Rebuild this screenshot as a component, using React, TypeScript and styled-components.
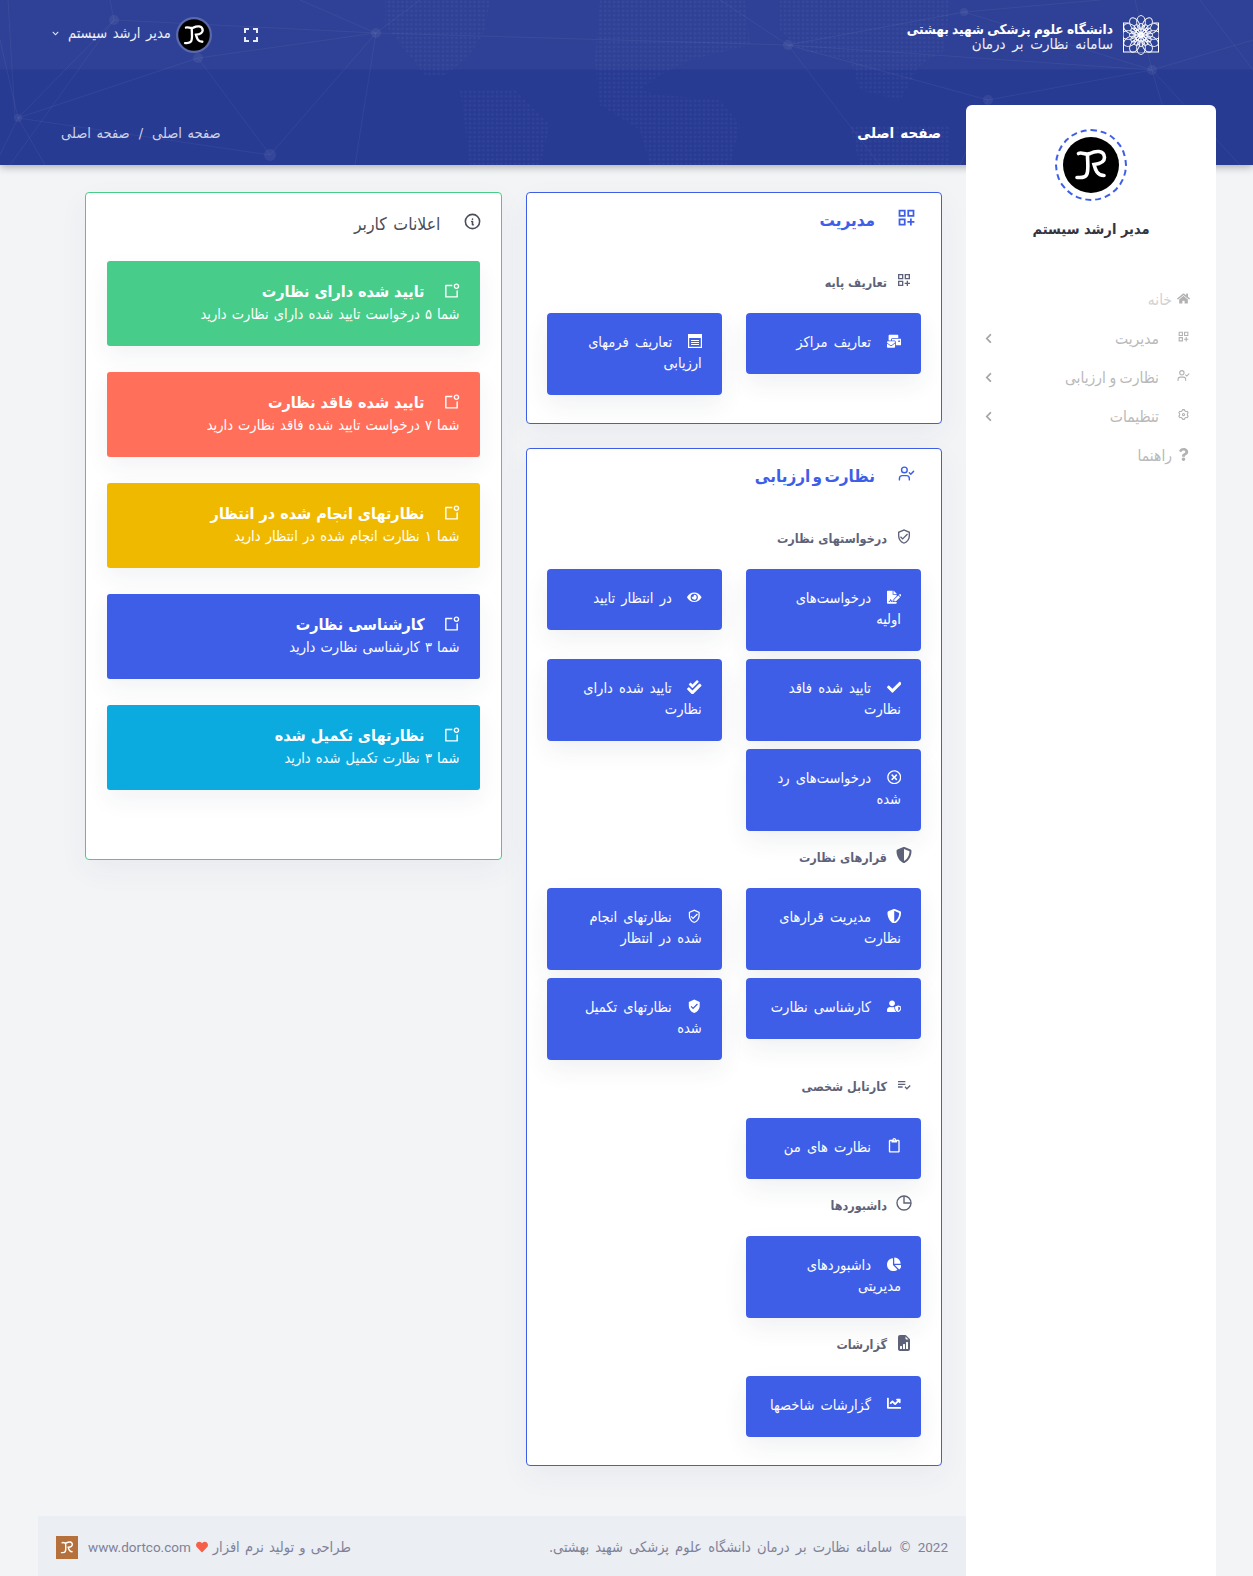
import React from "react";
import styled, { createGlobalStyle } from "styled-components";
import {
  FaMailBulk, FaFileSignature, FaEye, FaCheck, FaCheckDouble, FaRegTimesCircle, FaShieldAlt,
  FaUserShield, FaRegClipboard, FaChartPie, FaChartLine, FaHome, FaQuestion, FaChevronLeft, FaChevronDown, FaHeart,
} from "react-icons/fa";
import { MdOutlineDashboardCustomize, MdPlaylistAddCheck, MdVerifiedUser, MdOutlineVerifiedUser, MdFullscreen } from "react-icons/md";
import { TbInfoCircle } from "react-icons/tb";
import { LuUserCheck } from "react-icons/lu";
import { BsFileEarmarkBarGraphFill } from "react-icons/bs";
import { RiNotificationBadgeLine, RiSettings3Line } from "react-icons/ri";

const GlobalStyle = createGlobalStyle`
  html, body { margin: 0; padding: 0; background: #f3f4f6; }
  body { font-family: "DejaVu Sans Condensed", "DejaVu Sans", sans-serif; font-stretch: condensed; color: #3f4254; word-spacing: 1.5px; }
  * { box-sizing: border-box; }
`;

const Page = styled.div`
  direction: rtl;
  width: 1253px;
  min-height: 1576px;
  display: flex;
  flex-direction: column;
`;

const Header = styled.header`
  position: relative;
  height: 165px;
  background: #283b93;
  box-shadow: 0 2px 8px rgba(0, 0, 0, 0.3);
  overflow: hidden;
`;

const HeaderArt = styled.svg`
  position: absolute;
  inset: 0;
  width: 100%;
  height: 100%;
`;

const TopBar = styled.div`
  position: relative;
  height: 70px;
  background: rgba(255, 255, 255, 0.035);
  border-bottom: 1px solid rgba(0, 0, 0, 0.05);
  display: flex;
  align-items: center;
  justify-content: space-between;
  padding: 0 94px 0 52px;
  color: #fff;
`;

const Brand = styled.div`
  display: flex;
  align-items: center;
  gap: 10px;
`;

const BrandText = styled.div`
  display: flex;
  flex-direction: column;
  margin-top: 4px;
`;

const BrandTitle = styled.div`
  font-size: 13.5px;
  font-weight: 700;
  line-height: 17px;
  word-spacing: -1px;
`;

const BrandSub = styled.div`
  font-size: 15px;
  line-height: 15px;
  margin-top: -1px;
  color: #eef0f8;
  word-spacing: 2.5px;
`;

const UserTools = styled.div`
  display: flex;
  align-items: center;
  direction: ltr;
`;

const UserName = styled.span`
  direction: rtl;
  font-size: 14.5px;
  margin: -3px 5px 0 9px;
  color: #eef0f8;
`;

const ExpandIcon = styled.span`
  display: flex;
  margin-left: 27px;
  font-size: 24px;
  color: #e8eaf5;
`;

const SmallChevron = styled.span`
  display: flex;
  margin-top: -3px;
  font-size: 7px;
  color: #e8eaf5;
`;

const TitleBar = styled.div`
  position: relative;
  height: 95px;
  display: flex;
  justify-content: space-between;
  padding: 51px 312px 0 61px;
  color: #fff;
`;

const PageTitle = styled.h1`
  margin: 0;
  font-size: 15px;
  font-weight: 700;
  line-height: 24px;
`;

const Crumbs = styled.div`
  display: flex;
  gap: 9px;
  font-size: 14.5px;
  line-height: 24px;
  color: #ced3e8;
`;

const Body = styled.div`
  position: relative;
  flex: 1;
  display: flex;
  margin-top: -60px;
  padding-right: 37px;
`;

const Sidebar = styled.aside`
  flex: 0 0 250px;
  background: #fff;
  border-radius: 6px 6px 0 0;
  display: flex;
  flex-direction: column;
  align-items: center;
  padding-top: 24px;
`;

const AvatarRing = styled.div`
  width: 72px;
  height: 72px;
  display: flex;
  align-items: center;
  justify-content: center;
  border: 2px dashed #3e5ee8;
  border-radius: 50%;
`;

const UserTitle = styled.div`
  margin-top: 16px;
  font-size: 14.5px;
  font-weight: 700;
  line-height: 24px;
  color: #33363f;
  word-spacing: 0;
`;

const Nav = styled.nav`
  align-self: stretch;
  margin-top: 40px;
  padding: 0 26px 0 17px;
  display: flex;
  flex-direction: column;
`;

const NavRow = styled.div<{ $dim?: boolean; $h: number }>`
  height: ${(p) => p.$h}px;
  display: flex;
  align-items: center;
  font-size: 15.5px;
  word-spacing: -1px;
  color: ${(p) => (p.$dim ? "#d2d2d2" : "#b9b9b9")};
`;

const NavIcon = styled.span<{ $wide?: boolean }>`
  display: flex;
  width: ${(p) => (p.$wide ? 31 : 18)}px;
  margin-top: -4px;
  font-size: 13px;
  color: #b2b2b2;
`;

const NavLabel = styled.span`
  flex: 1;
`;

const NavChevron = styled.span`
  display: flex;
  font-size: 11px;
  color: #a5a5a5;
`;

const Main = styled.main`
  flex: 1;
  min-width: 0;
  display: flex;
  flex-direction: column;
`;

const Content = styled.div`
  flex: 1;
  display: grid;
  grid-template-columns: 1fr 1fr;
  column-gap: 24px;
  align-items: start;
  padding: 87px 24px 0 85px;
`;

const Column = styled.div`
  display: flex;
  flex-direction: column;
  gap: 24px;
`;

const Card = styled.section<{ $tone: string }>`
  background: #fff;
  border: 1px solid ${(p) => p.$tone};
  border-radius: 4px;
  box-shadow: 0 10px 30px rgba(40, 50, 90, 0.05);
`;

const ModuleCard = styled(Card)`
  padding: 15px 20px 28px;
`;

const ModuleTitle = styled.h2`
  margin: 0 0 40px;
  padding-right: 4px;
  height: 24px;
  display: flex;
  align-items: center;
  gap: 21px;
  font-size: 17px;
  font-weight: 700;
  color: #3e5ee8;
  word-spacing: -3px;
`;

const TitleIcon = styled.span<{ $size: number }>`
  display: flex;
  justify-content: center;
  width: 21px;
  margin-top: -5px;
  font-size: ${(p) => p.$size}px;
`;

const SectionHead = styled.h3`
  margin: 16.4px 0 21px;
  padding-right: 9px;
  height: 20px;
  display: flex;
  align-items: center;
  gap: 9px;
  font-size: 12.5px;
  font-weight: 700;
  color: #5e6278;
  word-spacing: 0;

  &:first-of-type { margin-top: 0; }
`;

const SectionIcon = styled.span<{ $size?: number }>`
  display: flex;
  margin-top: -4px;
  font-size: ${(p) => p.$size ?? 16}px;
  width: 16px;
  justify-content: center;
  color: #5e6278;
`;

const ActionGrid = styled.div`
  display: grid;
  grid-template-columns: 1fr 1fr;
  gap: 8px 24px;
  align-items: start;
`;

const ActionButton = styled.a`
  display: block;
  padding: 19px 20px 21px;
  background: #3e5ee8;
  color: #fff;
  border-radius: 4px;
  font-size: 14.5px;
  line-height: 21px;
  word-spacing: 2px;
  box-shadow: 0 10px 24px rgba(40, 50, 90, 0.07);
`;

const ActionIcon = styled.span`
  display: inline-block;
  margin-left: 15.5px;
  font-size: 14.5px;
  line-height: 1;
  vertical-align: -1px;
`;

const NoticeCard = styled(Card)`
  padding: 17px 21px 25px;
  height: 668px;
`;

const NoticeHead = styled.h2`
  margin: 0 -3px 23px 0;
  height: 28px;
  display: flex;
  align-items: center;
  gap: 21px;
  font-size: 17.5px;
  font-weight: 400;
  color: #4a4d5a;
`;

const NoticeList = styled.div`
  display: flex;
  flex-direction: column;
  gap: 26px;
`;

const Notice = styled.div<{ $bg: string }>`
  height: 85px;
  padding: 18px 20px 0;
  background: ${(p) => p.$bg};
  border-radius: 3px;
  color: #fff;
  box-shadow: 0 10px 24px rgba(40, 50, 90, 0.06);
`;

const NoticeTitle = styled.div`
  display: flex;
  align-items: center;
  gap: 18px;
  font-size: 16px;
  font-weight: 700;
  line-height: 26px;
  word-spacing: 0;
`;

const NoticeIcon = styled.span`
  display: flex;
  margin-top: -4px;
  font-size: 17px;
`;

const NoticeText = styled.div`
  font-size: 14.5px;
  line-height: 18px;
  word-spacing: 1px;
`;

const Footer = styled.footer`
  height: 60px;
  margin-inline-end: 38px;
  background: #ebeef3;
  display: flex;
  align-items: center;
  justify-content: space-between;
  padding: 2px 18px 0;
  font-size: 14.5px;
  word-spacing: 2px;
  color: #7e8299;
`;

const FooterCredit = styled.div`
  display: flex;
  align-items: center;
  gap: 5px;
  word-spacing: 1px;
`;

const Latin = styled.span`
  font-family: Roboto, sans-serif;
  font-stretch: normal;
  font-size: 13.5px;
  direction: ltr;
`;

const Heart = styled.span`
  display: flex;
  font-size: 12px;
  color: #f5604a;
`;

const FooterLogo = styled.span`
  display: flex;
  margin-right: 5px;
`;

const Logo: React.FC<{ size: number; ring?: boolean }> = ({ size, ring }) => (
  <svg width={size} height={size} viewBox="0 0 56 56" aria-hidden>
    <circle cx="28" cy="28" r="28" fill={ring ? "#5a69ac" : "#000"} />
    {ring && <circle cx="28" cy="28" r="24.5" fill="#000" />}
    <LogoStrokes />
  </svg>
);

const LogoStrokes = () => (
  <g fill="none" stroke="#fff" strokeWidth="3.6" strokeLinecap="round">
    <path d="M15.5 16.5C19 14.5 22 18.5 27 16.5 C32 14 41 12.5 41.5 20.5 C41.5 25.5 35.5 27 31 27.5 C32.5 33 34 38.5 41 38.5" />
    <path d="M24.5 18C24.5 25 26 34 23.5 38 C22 40.5 19.5 40.5 17 40.5 H14" />
  </g>
);

const SquareLogo = () => (
  <svg width="22" height="23" viewBox="0 0 56 56" aria-hidden preserveAspectRatio="none">
    <rect width="56" height="56" fill="#b5703c" />
    <LogoStrokes />
  </svg>
);

const Rosette = () => (
  <svg width="36" height="40" viewBox="-18 -20 36 40" aria-hidden>
    <rect x="-17.5" y="-12" width="35" height="29" fill="none" stroke="#fff" strokeWidth="1" />
    <circle r="17.5" fill="#2f4497" />
    {Array.from({ length: 12 }, (_, i) => (
      <g key={i} transform={`rotate(${i * 30})`} fill="none" stroke="#fff" strokeWidth="0.9">
        <ellipse cy="-12.5" rx="4.4" ry="7" />
        <ellipse cy="-6.5" rx="3" ry="5" />
      </g>
    ))}
    <circle r="3" fill="#fff" opacity="0.9" />
  </svg>
);

const FormIcon = () => (
  <svg width="14" height="14" viewBox="0 0 14 14" aria-hidden>
    <rect x="0.6" y="0.6" width="12.8" height="12.8" fill="none" stroke="#fff" strokeWidth="1.2" />
    <path d="M1 1h12v3H1zM3 6h8v1H3zM3 8h8v1H3zM3 10h8v1H3z" fill="#fff" />
  </svg>
);

const QuadrantIcon = () => (
  <svg width="16" height="16" viewBox="0 0 16 16" fill="none" stroke="currentColor" strokeWidth="1.4" aria-hidden>
    <circle cx="8" cy="8" r="7" />
    <path d="M8 1V8H15" />
  </svg>
);

const nodes: [number, number, number][] = [
  [376, 33, 5], [788, 45, 5], [964, 12, 4], [1152, 70, 5], [988, 100, 5], [18, 118, 4], [270, 155, 6], [198, 58, 5], [114, 20, 5],
];
const edges: [number, number][] = [
  [8, 0], [7, 0], [7, 5], [7, 6], [6, 0], [5, 6], [5, 8], [0, 1], [1, 2], [1, 3], [4, 3], [3, 2], [4, 1],
];
const extraLines = [
  "M18 118L0 40", "M18 118L45 165", "M18 118L-5 165", "M114 20L10 165", "M376 33L355 165", "M376 33L420 0",
  "M114 20L110 0", "M8 0L15 118", "M964 12L1100 0", "M988 100L960 165", "M1152 70L1240 165", "M1152 70L1135 0",
  "M1152 70L1253 40", "M1152 70L1180 165", "M788 45L720 0", "M788 45L880 165", "M1200 0L1253 70", "M300 0L376 33",
];
const continents = [
  "M385 0H490L485 30L470 55L445 75L425 75L405 50L385 25Z",
  "M460 90H515L550 125L540 165H470Z",
  "M600 0H745L750 45L690 60L660 75L640 90L660 95L720 100L740 125L730 165H650L640 130L600 105L595 60Z",
  "M780 0H950L945 50L920 65L900 100L860 90L850 60L800 50L780 30Z",
  "M850 125H950V165H860Z",
];

type ActionItem = { icon: React.ReactNode; label: string };
type Section = { icon: React.ReactNode; size?: number; title: string; items: ActionItem[] };

const modules: { tone: string; icon: React.ReactNode; iconSize: number; title: string; sections: Section[] }[] = [
  {
    tone: "#3e5ee8",
    icon: <MdOutlineDashboardCustomize />,
    iconSize: 21,
    title: "مدیریت",
    sections: [
      {
        icon: <MdOutlineDashboardCustomize />,
        title: "تعاریف پایه",
        items: [
          { icon: <FaMailBulk />, label: "تعاریف مراکز" },
          { icon: <FormIcon />, label: "تعاریف فرمهای ارزیابی" },
        ],
      },
    ],
  },
  {
    tone: "#3e5ee8",
    icon: <LuUserCheck />,
    iconSize: 17,
    title: "نظارت و ارزیابی",
    sections: [
      {
        icon: <MdOutlineVerifiedUser />,
        size: 17,
        title: "درخواستهای نظارت",
        items: [
          { icon: <FaFileSignature />, label: "درخواست‌های اولیه" },
          { icon: <FaEye />, label: "در انتظار تایید" },
          { icon: <FaCheck />, label: "تایید شده فاقد نظارت" },
          { icon: <FaCheckDouble />, label: "تایید شده دارای نظارت" },
          { icon: <FaRegTimesCircle />, label: "درخواست‌های رد شده" },
        ],
      },
      {
        icon: <FaShieldAlt />,
        size: 18,
        title: "قرارهای نظارت",
        items: [
          { icon: <FaShieldAlt />, label: "مدیریت قرارهای نظارت" },
          { icon: <MdOutlineVerifiedUser />, label: "نظارتهای انجام شده در انتظار" },
          { icon: <FaUserShield />, label: "کارشناسی نظارت" },
          { icon: <MdVerifiedUser />, label: "نظارتهای تکمیل شده" },
        ],
      },
      {
        icon: <MdPlaylistAddCheck />,
        title: "کارتابل شخصی",
        items: [{ icon: <FaRegClipboard />, label: "نظارت های من" }],
      },
      {
        icon: <QuadrantIcon />,
        title: "داشبوردها",
        items: [{ icon: <FaChartPie />, label: "داشبوردهای مدیریتی" }],
      },
      {
        icon: <BsFileEarmarkBarGraphFill />,
        title: "گزارشات",
        items: [{ icon: <FaChartLine />, label: "گزارشات شاخصها" }],
      },
    ],
  },
];

const notices = [
  { bg: "#47cd89", title: "تایید شده دارای نظارت", text: "شما ۵ درخواست تایید شده دارای نظارت دارید" },
  { bg: "#ff6f59", title: "تایید شده فاقد نظارت", text: "شما ۷ درخواست تایید شده فاقد نظارت دارید" },
  { bg: "#efb900", title: "نظارتهای انجام شده در انتظار", text: "شما ۱ نظارت انجام شده در انتظار دارید" },
  { bg: "#3e5ee8", title: "کارشناسی نظارت", text: "شما ۳ کارشناسی نظارت دارید" },
  { bg: "#0cabdf", title: "نظارتهای تکمیل شده", text: "شما ۳ نظارت تکمیل شده دارید" },
];

export default function App() {
  return (
    <>
      <GlobalStyle />
      <Page>
        <Header>
          <HeaderArt viewBox="0 0 1253 165" preserveAspectRatio="none" aria-hidden>
            <defs>
              <pattern id="dots" width="4.5" height="4.5" patternUnits="userSpaceOnUse">
                <circle cx="2" cy="2" r="1.25" fill="#fff" fillOpacity="0.045" />
              </pattern>
            </defs>
            {continents.map((d) => (
              <path key={d} d={d} fill="url(#dots)" />
            ))}
            <g stroke="#fff" strokeOpacity="0.05" strokeWidth="1" fill="none">
              {edges.map(([a, b]) => (
                <line key={`${a}-${b}`} x1={nodes[a][0]} y1={nodes[a][1]} x2={nodes[b][0]} y2={nodes[b][1]} />
              ))}
              {extraLines.map((d) => (
                <path key={d} d={d} />
              ))}
            </g>
            {nodes.map(([x, y, r]) => (
              <circle key={`${x}-${y}`} cx={x} cy={y} r={r} fill="#fff" fillOpacity="0.06" />
            ))}
          </HeaderArt>
          <TopBar>
            <Brand>
              <Rosette />
              <BrandText>
                <BrandTitle>دانشگاه علوم پزشکی شهید بهشتی</BrandTitle>
                <BrandSub>سامانه نظارت بر درمان</BrandSub>
              </BrandText>
            </Brand>
            <UserTools>
              <SmallChevron>
                <FaChevronDown />
              </SmallChevron>
              <UserName>مدیر ارشد سیستم</UserName>
              <Logo size={36} ring />
              <ExpandIcon>
                <MdFullscreen />
              </ExpandIcon>
            </UserTools>
          </TopBar>
          <TitleBar>
            <PageTitle>صفحه اصلی</PageTitle>
            <Crumbs>
              <span>صفحه اصلی</span>
              <span>/</span>
              <span>صفحه اصلی</span>
            </Crumbs>
          </TitleBar>
        </Header>
        <Body>
          <Sidebar>
            <AvatarRing>
              <Logo size={56} />
            </AvatarRing>
            <UserTitle>مدیر ارشد سیستم</UserTitle>
            <Nav>
              <NavRow $dim $h={38}>
                <NavIcon><FaHome /></NavIcon>
                <NavLabel>خانه</NavLabel>
              </NavRow>
              <NavRow $h={39}>
                <NavIcon $wide><MdOutlineDashboardCustomize /></NavIcon>
                <NavLabel>مدیریت</NavLabel>
                <NavChevron><FaChevronLeft /></NavChevron>
              </NavRow>
              <NavRow $h={39}>
                <NavIcon $wide><LuUserCheck /></NavIcon>
                <NavLabel>نظارت و ارزیابی</NavLabel>
                <NavChevron><FaChevronLeft /></NavChevron>
              </NavRow>
              <NavRow $h={39}>
                <NavIcon $wide><RiSettings3Line /></NavIcon>
                <NavLabel>تنظیمات</NavLabel>
                <NavChevron><FaChevronLeft /></NavChevron>
              </NavRow>
              <NavRow $h={40}>
                <NavIcon><FaQuestion /></NavIcon>
                <NavLabel>راهنما</NavLabel>
              </NavRow>
            </Nav>
          </Sidebar>
          <Main>
            <Content>
              <Column>
                {modules.map((m) => (
                  <ModuleCard key={m.title} $tone={m.tone}>
                    <ModuleTitle>
                      <TitleIcon $size={m.iconSize}>{m.icon}</TitleIcon>
                      {m.title}
                    </ModuleTitle>
                    {m.sections.map((s) => (
                      <React.Fragment key={s.title}>
                        <SectionHead>
                          <SectionIcon $size={s.size}>{s.icon}</SectionIcon>
                          {s.title}
                        </SectionHead>
                        <ActionGrid>
                          {s.items.map((a) => (
                            <ActionButton key={a.label}>
                              <ActionIcon>{a.icon}</ActionIcon>
                              {a.label}
                            </ActionButton>
                          ))}
                        </ActionGrid>
                      </React.Fragment>
                    ))}
                  </ModuleCard>
                ))}
              </Column>
              <Column>
                <NoticeCard $tone="#47cd89">
                  <NoticeHead>
                    <TitleIcon $size={19}><TbInfoCircle /></TitleIcon>
                    اعلانات کاربر
                  </NoticeHead>
                  <NoticeList>
                    {notices.map((n) => (
                      <Notice key={n.title} $bg={n.bg}>
                        <NoticeTitle>
                          <NoticeIcon><RiNotificationBadgeLine /></NoticeIcon>
                          {n.title}
                        </NoticeTitle>
                        <NoticeText>{n.text}</NoticeText>
                      </Notice>
                    ))}
                  </NoticeList>
                </NoticeCard>
              </Column>
            </Content>
            <Footer>
              <span>
                <Latin>2022</Latin> © سامانه نظارت بر درمان دانشگاه علوم پزشکی شهید بهشتی.
              </span>
              <FooterCredit>
                <span>طراحی و تولید نرم افزار</span>
                <Heart><FaHeart /></Heart>
                <Latin>www.dortco.com</Latin>
                <FooterLogo><SquareLogo /></FooterLogo>
              </FooterCredit>
            </Footer>
          </Main>
        </Body>
      </Page>
    </>
  );
}
